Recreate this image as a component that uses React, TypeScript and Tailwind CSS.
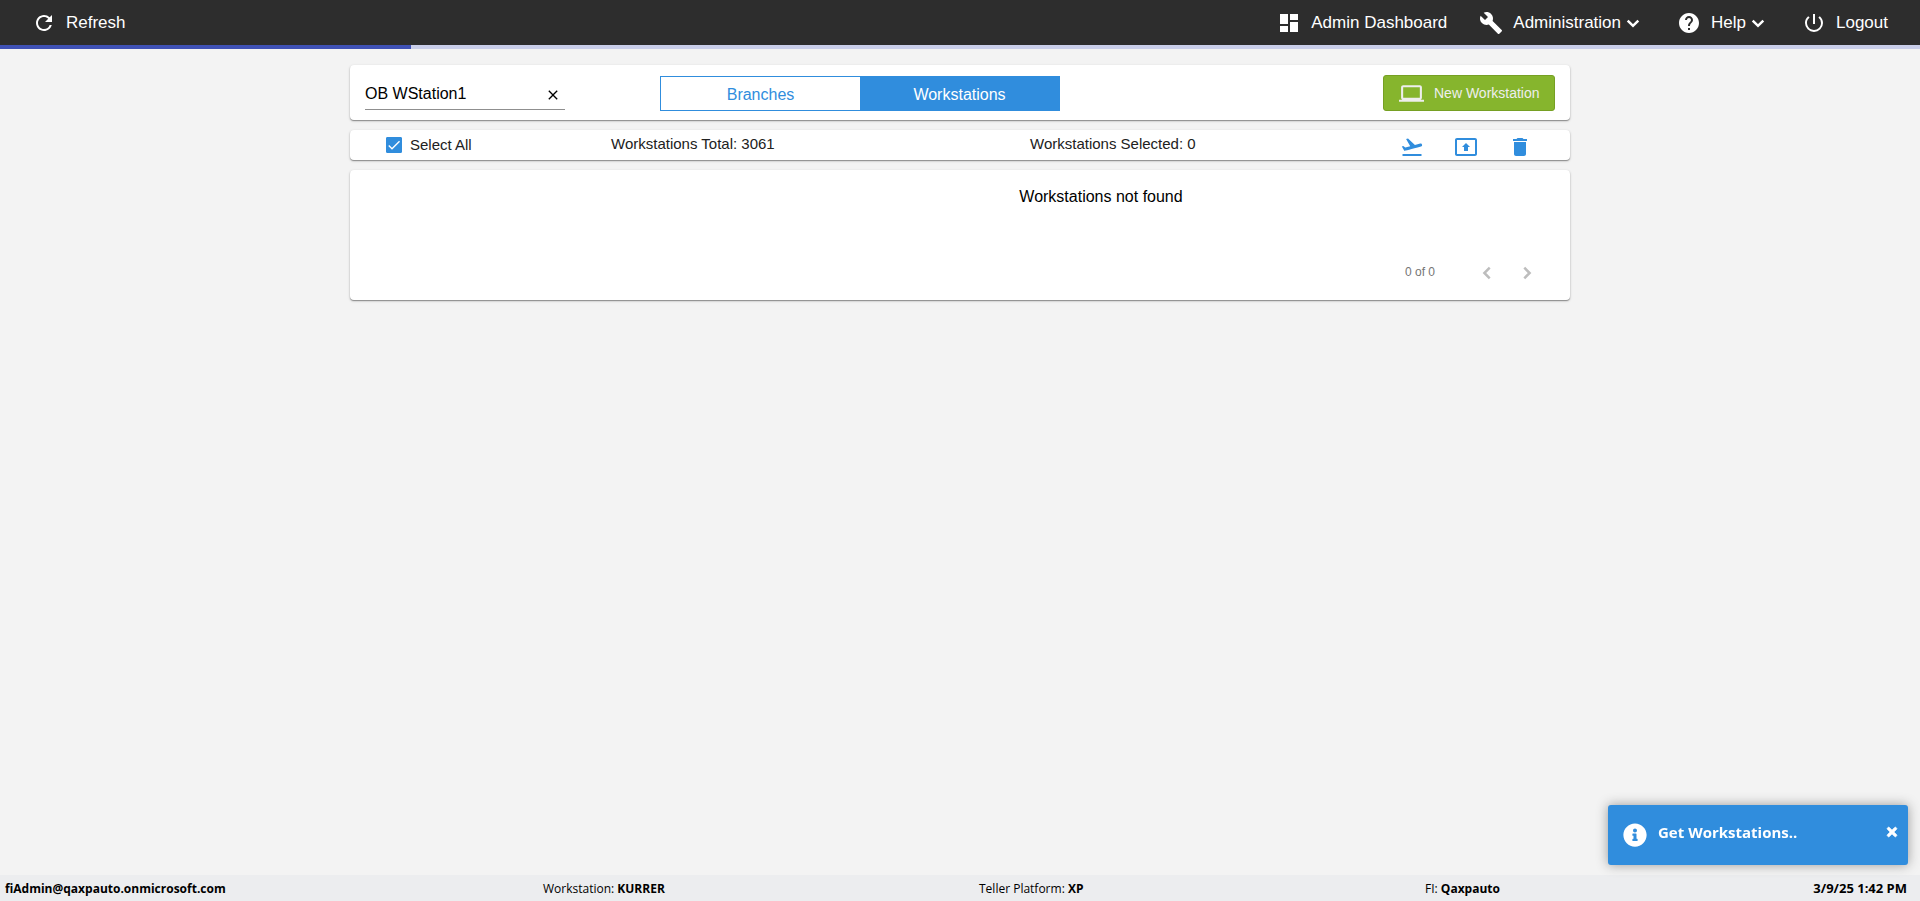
import { useState } from "react";
import type { ReactNode } from "react";
import {
  MdBuild,
  MdCheck,
  MdClose,
  MdDashboard,
  MdDelete,
  MdFlightTakeoff,
  MdHelp,
  MdLaptop,
  MdPowerSettingsNew,
  MdPresentToAll,
  MdRefresh,
} from "react-icons/md";
import { FaInfoCircle, FaTimes } from "react-icons/fa";

const CHEVRONS = {
  down: "M6.7 9.6 12 14.8l5.3-5.2",
  left: "M14.7 6.7 9.4 12l5.3 5.3",
  right: "M9.3 6.7 14.6 12l-5.3 5.3",
};

function Chevron({ direction }: { direction: keyof typeof CHEVRONS }) {
  return (
    <svg viewBox="0 0 24 24" fill="none" stroke="currentColor" strokeWidth="2.5" className="size-6" aria-hidden="true">
      <path d={CHEVRONS[direction]} />
    </svg>
  );
}

function NavButton({ icon, label, menu }: { icon: ReactNode; label: string; menu?: boolean }) {
  return (
    <button type="button" className="flex items-center gap-2.5 text-[17px] leading-6">
      {icon}
      <span className="flex items-center">
        {label}
        {menu && <Chevron direction="down" />}
      </span>
    </button>
  );
}

function Header() {
  return (
    <header className="bg-[#2d2d2d] text-white">
      <div className="flex h-[45px] items-center justify-between pr-8 pl-8">
        <NavButton icon={<MdRefresh className="size-6" />} label="Refresh" />
        <nav className="flex items-center gap-8">
          <NavButton icon={<MdDashboard className="size-6" />} label="Admin Dashboard" />
          <NavButton icon={<MdBuild className="size-6" />} label="Administration" menu />
          <NavButton icon={<MdHelp className="size-6" />} label="Help" menu />
          <NavButton icon={<MdPowerSettingsNew className="size-6" />} label="Logout" />
        </nav>
      </div>
      <div role="progressbar" aria-label="Loading" className="h-1 bg-[#c9cee9]">
        <div className="h-full w-[21.4%] bg-[#3f51b5]" />
      </div>
    </header>
  );
}

function Card({ className, children }: { className: string; children: ReactNode }) {
  return (
    <section className={`rounded-[4px] bg-white shadow-[0_1px_1px_#8e8e8e,0_1px_3px_#0000002e] ${className}`}>
      {children}
    </section>
  );
}

function Toolbar() {
  const [query, setQuery] = useState("OB WStation1");
  return (
    <Card className="flex h-[55px] items-start px-[15px]">
      <div className="mt-[10px] flex h-[35px] w-[200px] items-center border-b border-[#8f8f8f] pt-1.5">
        <input
          aria-label="Search"
          value={query}
          onChange={(e) => setQuery(e.target.value)}
          className="min-w-0 flex-1 pb-0.5 text-base text-black outline-none"
        />
        <button type="button" aria-label="Clear search" className="mr-1 text-black" onClick={() => setQuery("")}>
          <MdClose className="size-4" />
        </button>
      </div>
      <div className="mt-[11px] ml-[95px] flex h-[35px] w-[400px] border border-[#308ddd]">
        <button type="button" className="flex-1 pt-0.5 text-[#308ddd]">
          Branches
        </button>
        <button type="button" className="flex-1 bg-[#308ddd] pt-0.5 text-white">
          Workstations
        </button>
      </div>
      <button
        type="button"
        className="mt-[10px] ml-auto flex h-9 w-[172px] items-center gap-2.5 rounded-[3px] border border-[#76a023] bg-[#86b52d] pl-[15px] text-sm text-[#eeeeee]"
      >
        <MdLaptop className="size-[25px]" />
        New Workstation
      </button>
    </Card>
  );
}

function SelectionBar() {
  const [checked, setChecked] = useState(true);
  return (
    <Card className="flex h-[30px] items-center pl-9 text-[15px] leading-5 text-[#212121]">
      <label className="flex flex-[225] items-center gap-2">
        <span className="grid size-4">
          <input
            type="checkbox"
            checked={checked}
            onChange={(e) => setChecked(e.target.checked)}
            className="col-start-1 row-start-1 size-4 appearance-none rounded-[1px] border border-[#308ddd] checked:bg-[#308ddd]"
          />
          {checked && <MdCheck className="pointer-events-none col-start-1 row-start-1 size-4 text-white" />}
        </span>
        Select All
      </label>
      <p className="flex-[419] pb-0.5">Workstations Total: 3061</p>
      <p className="flex-[370] pb-0.5">Workstations Selected: 0</p>
      <div className="flex flex-[170] gap-[30px] pt-1 text-[#308ddd]">
        <button type="button" aria-label="Deploy">
          <MdFlightTakeoff className="size-6" />
        </button>
        <button type="button" aria-label="Move">
          <MdPresentToAll className="size-6" />
        </button>
        <button type="button" aria-label="Delete">
          <MdDelete className="size-6" />
        </button>
      </div>
    </Card>
  );
}

function Results() {
  return (
    <Card className="flex h-[130px] flex-col justify-between pt-[15px] pb-[15px]">
      <p className="pl-[282px] text-center text-base text-black">Workstations not found</p>
      <div className="flex items-center justify-end pr-[31px] text-xs text-[#757575]">
        <span className="pb-0.5">0 of 0</span>
        <button type="button" aria-label="Previous page" className="ml-10 text-[#bdbdbd]">
          <Chevron direction="left" />
        </button>
        <button type="button" aria-label="Next page" className="ml-4 text-[#bdbdbd]">
          <Chevron direction="right" />
        </button>
      </div>
    </Card>
  );
}

function Toast({ onClose }: { onClose: () => void }) {
  return (
    <div
      role="status"
      className="fixed right-3 bottom-9 flex h-[60px] w-[300px] rounded-[3px] bg-[#308ddd] pt-[15px] pr-[9px] pl-[15px] font-['Open_Sans','Noto_Sans',sans-serif] text-white shadow-[0_0_12px_#999999]"
    >
      <FaInfoCircle className="mt-[3px] size-6" />
      <p className="ml-[11px] flex-1 text-[15px] leading-6 font-bold">Get Workstations..</p>
      <button type="button" aria-label="Close notification" className="self-start pt-[5px]" onClick={onClose}>
        <FaTimes className="size-[14px] stroke-white stroke-[30]" />
      </button>
    </div>
  );
}

function Footer() {
  return (
    <footer className="flex h-[26px] items-center bg-[#ecedef] pt-0.5 pr-[13px] pl-[5px] font-['Open_Sans','Noto_Sans',sans-serif] text-xs text-black">
      <b className="flex-[538]">fiAdmin@qaxpauto.onmicrosoft.com</b>
      <span className="flex-[436]">
        Workstation: <b>KURRER</b>
      </span>
      <span className="flex-[446]">
        Teller Platform: <b>XP</b>
      </span>
      <span className="flex-[387]">
        FI: <b>Qaxpauto</b>
      </span>
      <b className="w-[95px] text-right text-[13px]">3/9/25 1:42 PM</b>
    </footer>
  );
}

export default function App() {
  const [toast, setToast] = useState(true);
  return (
    <div className="flex min-h-screen flex-col bg-[#f3f3f3] font-['Liberation_Sans',Arial,sans-serif]">
      <Header />
      <main className="mx-auto flex w-full max-w-[1220px] flex-1 flex-col gap-2.5 pt-4">
        <Toolbar />
        <SelectionBar />
        <Results />
      </main>
      <Footer />
      {toast && <Toast onClose={() => setToast(false)} />}
    </div>
  );
}
